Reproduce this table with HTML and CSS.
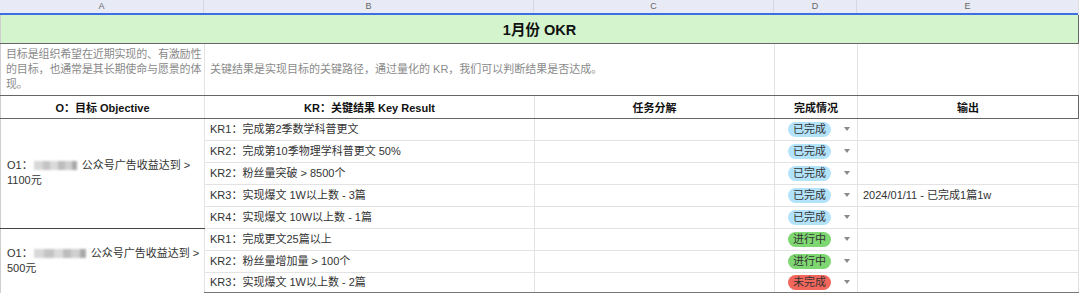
FILE: index.html
```html
<!DOCTYPE html>
<html lang="zh">
<head>
<meta charset="utf-8">
<title>1月份 OKR</title>
<link rel="stylesheet" href="styles.css">
</head>
<body>
<div class="sheet">
  <div class="colhdr">
    <div class="ch a">A</div>
    <div class="ch b">B</div>
    <div class="ch c">C</div>
    <div class="ch d">D</div>
    <div class="ch e">E</div>
  </div>
  <table class="grid">
    <colgroup>
      <col class="w-a"><col class="w-b"><col class="w-c"><col class="w-d"><col class="w-e">
    </colgroup>
    <tr class="title-row">
      <td colspan="5" class="title">1月份 OKR</td>
    </tr>
    <tr class="desc-row">
      <td class="desc desc-a">目标是组织希望在近期实现的、有激励性的目标，也通常是其长期使命与愿景的体现。</td>
      <td class="desc" colspan="2">关键结果是实现目标的关键路径，通过量化的 KR，我们可以判断结果是否达成。</td>
      <td></td>
      <td class="last"></td>
    </tr>
    <tr class="head-row">
      <th>O：目标 Objective</th>
      <th>KR：关键结果 Key Result</th>
      <th>任务分解</th>
      <th>完成情况</th>
      <th class="last">输出</th>
    </tr>
    <tr class="row">
      <td rowspan="5" class="obj">O1：<span class="blur w1"></span> 公众号广告收益达到 &gt;<br>1100元</td>
      <td>KR1：完成第2季数学科普更文</td>
      <td></td>
      <td class="st"><span class="pill blue">已完成</span><span class="tri"></span></td>
      <td class="last"></td>
    </tr>
    <tr class="row">
      <td>KR2：完成第10季物理学科普更文 50%</td>
      <td></td>
      <td class="st"><span class="pill blue">已完成</span><span class="tri"></span></td>
      <td class="last"></td>
    </tr>
    <tr class="row">
      <td>KR2：粉丝量突破 &gt; 8500个</td>
      <td></td>
      <td class="st"><span class="pill blue">已完成</span><span class="tri"></span></td>
      <td class="last"></td>
    </tr>
    <tr class="row">
      <td>KR3：实现爆文 1W以上数 - 3篇</td>
      <td></td>
      <td class="st"><span class="pill blue">已完成</span><span class="tri"></span></td>
      <td class="last">2024/01/11 - 已完成1篇1w</td>
    </tr>
    <tr class="row">
      <td>KR4：实现爆文 10W以上数 - 1篇</td>
      <td></td>
      <td class="st"><span class="pill blue">已完成</span><span class="tri"></span></td>
      <td class="last"></td>
    </tr>
    <tr class="row group">
      <td rowspan="3" class="obj">O1：<span class="blur w2"></span> 公众号广告收益达到 &gt;<br>500元</td>
      <td>KR1：完成更文25篇以上</td>
      <td></td>
      <td class="st"><span class="pill green">进行中</span><span class="tri"></span></td>
      <td class="last"></td>
    </tr>
    <tr class="row">
      <td>KR2：粉丝量增加量 &gt; 100个</td>
      <td></td>
      <td class="st"><span class="pill green">进行中</span><span class="tri"></span></td>
      <td class="last"></td>
    </tr>
    <tr class="row end">
      <td>KR3：实现爆文 1W以上数 - 2篇</td>
      <td></td>
      <td class="st"><span class="pill red">未完成</span><span class="tri"></span></td>
      <td class="last"></td>
    </tr>
  </table>
</div>
</body>
</html>
```

FILE: styles.css
```css
* { box-sizing: border-box; }
html, body {
  margin: 0;
  padding: 0;
  background: #fff;
}
body {
  font-family: "Liberation Sans", "Noto Sans CJK SC", sans-serif;
  font-size: 11px;
  color: #333;
  width: 1080px;
  height: 293px;
  overflow: hidden;
}
.sheet {
  width: 1079px;
  border-right: 1px solid #e2e2e2;
}
.colhdr {
  display: flex;
  height: 15px;
  background: #e8ebf6;
  border-bottom: 2px solid #3d6fe3;
  width: 1078px;
}
.ch {
  flex: none;
  height: 13px;
  line-height: 13px;
  text-align: center;
  color: #666;
  font-size: 9px;
  border-right: 1px solid #d6d9e4;
}
.ch.a { width: 204px; }
.ch.b { width: 330px; }
.ch.c { width: 240px; }
.ch.d { width: 83px; }
.ch.e { width: 221px; border-right: none; }

.grid {
  border-collapse: collapse;
  table-layout: fixed;
  width: 1078px;
}
.w-a { width: 204px; }
.w-b { width: 330px; }
.w-c { width: 240px; }
.w-d { width: 83px; }
.w-e { width: 221px; }

.grid td, .grid th {
  border: 1px solid #e3e3e3;
  padding: 0 5px;
  vertical-align: middle;
  white-space: nowrap;
  overflow: hidden;
}
.grid td:first-child, .grid th:first-child { border-left: 1px solid #cfcfcf; }

.title-row td {
  height: 28px;
  background: #d3f4cd;
  border: 1px solid #666;
  border-top: none;
  text-align: center;
  font-weight: bold;
  font-size: 14.5px;
  color: #111;
}
.desc-row td {
  height: 52px;
  border-bottom: 1px solid #666;
}
.grid .desc {
  color: #8a8a8a;
  white-space: normal;
  line-height: 15px;
  padding: 0 4px 0 5px;
}
.grid .desc-a {
  padding: 0 0 0 5px;
  letter-spacing: -0.15px;
}
.grid td.last, .grid th.last { border-right: 1px solid #666; }
.desc-row td.last { border-right: 1px solid #e3e3e3; }

.head-row th {
  height: 23px;
  font-weight: bold;
  color: #111;
  font-size: 11px;
  text-align: center;
  border-bottom: 1px solid #666;
  border-top: 1px solid #666;
}
.row td {
  height: 22px;
  line-height: 14px;
}
.row td.last { border-right: 1px solid #e3e3e3; }
.row.group td { border-top: 1px solid #444; }
.row.end td { border-bottom: 2px solid #777; height: 21px; }
.grid td.obj {
  white-space: nowrap;
  line-height: 15px;
  padding: 0 6px;
  border-bottom: 1px solid #444;
}

.blur {
  display: inline-block;
  height: 9px;
  vertical-align: -1px;
  margin: 0 2px 0 1px;
  background: linear-gradient(90deg, #d8d8d8 0 20%, #c4c4c4 20% 38%, #dadada 38% 55%, #bdbdbd 55% 72%, #d0d0d0 72% 88%, #a9a9a9 88% 100%);
  filter: blur(1px);
}
.blur.w1 { width: 43px; }
.blur.w2 { width: 52px; }

.st {
  position: relative;
}
.pill {
  display: inline-block;
  height: 15px;
  line-height: 15px;
  padding: 0 5px;
  border-radius: 8px;
  margin-left: 8px;
  font-size: 11px;
  color: #333;
}
.pill.blue { background: #b2e3fb; }
.pill.green { background: #7fd772; }
.pill.red { background: #f3665c; }
.tri {
  position: absolute;
  right: 7px;
  top: 50%;
  margin-top: -2px;
  width: 0;
  height: 0;
  border-left: 3.5px solid transparent;
  border-right: 3.5px solid transparent;
  border-top: 4px solid #8a8a8a;
}
```
